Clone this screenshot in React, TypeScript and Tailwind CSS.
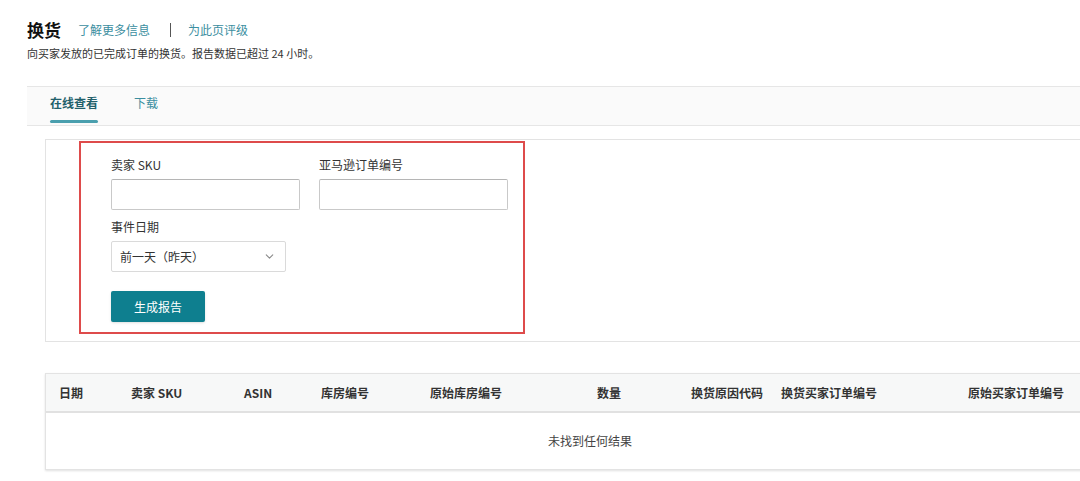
import React from 'react';
import { ChevronDown } from 'lucide-react';

const FONT = { fontFamily: '"Noto Sans CJK SC", "Noto Sans", sans-serif' };

const columns = [
  { label: '日期', width: 'w-[72px]' },
  { label: '卖家 SKU', width: 'w-[113px]' },
  { label: 'ASIN', width: 'w-[77px]' },
  { label: '库房编号', width: 'w-[109px]' },
  { label: '原始库房编号', width: 'w-[167px]' },
  { label: '数量', width: 'w-[94px]' },
  { label: '换货原因代码', width: 'w-[90px]' },
  { label: '换货买家订单编号', width: 'w-[187px]' },
  { label: '原始买家订单编号', width: 'w-[140px]' },
];

export default function App() {
  return (
    <div className="w-[1080px] h-[481px] overflow-hidden bg-white text-[#333]" style={FONT}>
      {/* page header */}
      <div className="pl-[27px] pt-[19px]">
        <div className="flex items-center h-[22px]">
          <h1 className="text-[17px] font-bold leading-[22px] text-[#111]">换货</h1>
          <a className="ml-[17px] text-[12px] text-[#3b8ea0] leading-[22px]">了解更多信息</a>
          <span className="ml-[20px] w-px h-[14px] bg-[#555]" />
          <a className="ml-[17px] text-[12px] text-[#3b8ea0] leading-[22px]">为此页评级</a>
        </div>
        <p className="mt-[4px] text-[11px] leading-[16px] text-[#333]">向买家发放的已完成订单的换货。报告数据已超过 24 小时。</p>
      </div>

      {/* tabs */}
      <div className="ml-[27px] mt-[25px] h-[40px] bg-[#fafafa] border-t border-b border-[#e6e6e6] flex items-end pl-[23px] gap-[36px]">
        <div className="flex flex-col items-center">
          <span className="text-[12px] font-bold leading-[16px] text-[#22606b]">在线查看</span>
          <span className="mt-[9px] h-[3px] w-full bg-[#4a9fae] rounded-full" />
          <span className="h-[2px]" />
        </div>
        <div className="flex flex-col">
          <span className="text-[12px] leading-[16px] text-[#3b8ea0]">下载</span>
          <span className="h-[14px]" />
        </div>
      </div>

      {/* filter panel */}
      <div className="ml-[45px] mt-[13px] w-[1100px] h-[203px] border border-[#e3e3e3] pt-px">
        <div className="ml-[33px] w-[446px] h-[193px] border-2 border-[#de4b4b] pl-[30px] pt-[14px]">
          <div className="flex gap-[19px]">
            <div>
              <label className="block text-[12px] leading-[16px] text-[#333]">卖家 SKU</label>
              <div className="mt-[6px] w-[189px] h-[31px] border border-[#c9c9c9] border-t-[#b5b5b5] rounded-[2px] bg-white" />
            </div>
            <div>
              <label className="block text-[12px] leading-[16px] text-[#333]">亚马逊订单编号</label>
              <div className="mt-[6px] w-[189px] h-[31px] border border-[#c9c9c9] border-t-[#b5b5b5] rounded-[2px] bg-white" />
            </div>
          </div>
          <label className="mt-[9px] block text-[12px] leading-[16px] text-[#333]">事件日期</label>
          <div className="mt-[6px] w-[175px] h-[31px] border border-[#dadada] rounded-[2px] bg-white flex items-center justify-between pl-[8px] pr-[9px]">
            <span className="text-[12px] text-[#333]">前一天（昨天）</span>
            <ChevronDown size={13} strokeWidth={2} className="text-[#8a8a8a]" />
          </div>
          <button className="mt-[19px] w-[94px] h-[31px] rounded-[2px] bg-[#0e7f8f] text-white text-[12px] shadow-sm">生成报告</button>
        </div>
      </div>

      {/* results table */}
      <div className="ml-[45px] mt-[31px] w-[1090px] border border-[#e3e3e3] shadow-[0_1px_2px_rgba(0,0,0,0.12)]">
        <div className="h-[39px] bg-[#f7f8f8] border-b-2 border-[#e1e1e1] flex items-center pl-[13px]">
          {columns.map(c => (
            <div key={c.label} className={`${c.width} shrink-0 text-[12px] font-bold text-[#333]`}>
              {c.label}
            </div>
          ))}
        </div>
        <div className="h-[56px] flex items-center justify-center text-[12px] text-[#444]">未找到任何结果</div>
      </div>
    </div>
  );
}
